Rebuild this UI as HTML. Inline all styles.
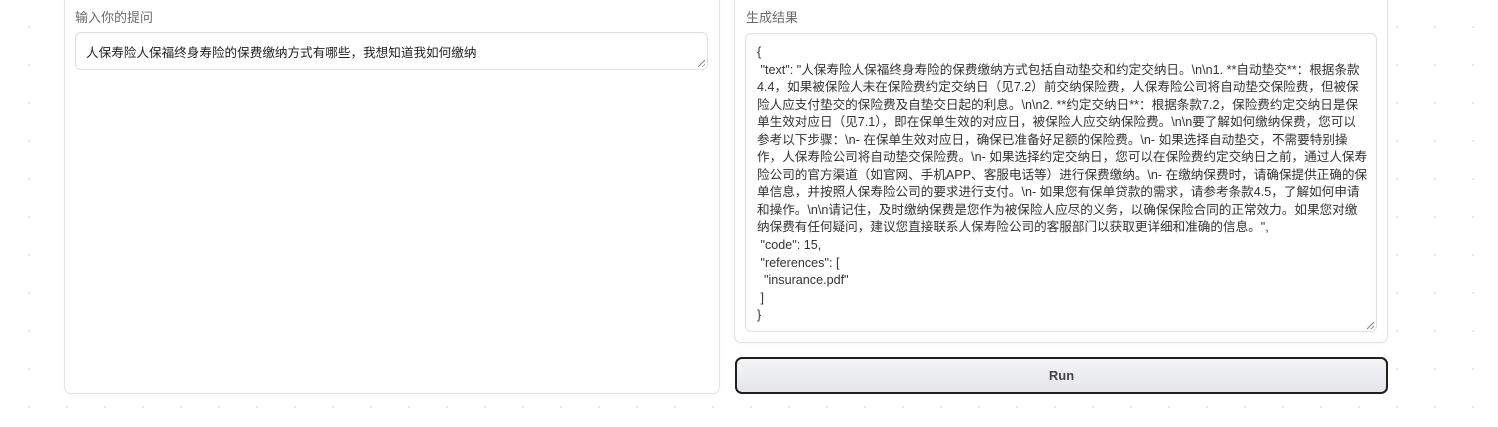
<!DOCTYPE html>
<html><head><meta charset="utf-8"><style>
body{margin:0;width:1498px;height:427px;background:#fff;position:relative;overflow:hidden;font-family:"Liberation Sans","Noto Sans CJK SC",sans-serif;}
.bg{position:absolute;inset:0;background-image:radial-gradient(circle,#e6e6e6 1px,transparent 1.3px);background-size:38px 38px;background-position:10px 8px;}
.panel{position:absolute;background:#fff;border:1px solid #e4e4e7;border-radius:7px;box-shadow:0 1px 2px rgba(0,0,0,.04);}
.label{position:absolute;font-size:13px;color:#6b6b6b;}
.ta{position:absolute;border:1px solid #e0e0e3;border-radius:6px;background:#fff;box-shadow:0 1px 2px rgba(0,0,0,.04) inset;}
.grip{position:absolute;right:2px;bottom:2px;width:7px;height:7px;background:linear-gradient(135deg,transparent 45%,#888 45%,#888 55%,transparent 55%,transparent 75%,#888 75%,#888 85%,transparent 85%);}
.out{position:absolute;left:11px;top:10px;font-size:12.6px;line-height:17.55px;color:#333;white-space:pre;}
.btn{position:absolute;left:735px;top:357px;width:649px;height:33px;border:2px solid #1f1f1f;border-radius:7px;background:linear-gradient(#f4f4f6,#e5e6ea);text-align:center;line-height:33px;font-size:13px;font-weight:bold;color:#444;}
</style></head><body>
<div class="bg"></div>
<div class="panel" style="left:64px;top:-8px;width:654px;height:400px;"></div>
<div class="label" style="left:75px;top:7px;">输入你的提问</div>
<div class="ta" style="left:75px;top:32px;width:631px;height:36px;"><div style="position:absolute;left:10px;top:9px;font-size:12.6px;color:#222;">人保寿险人保福终身寿险的保费缴纳方式有哪些，我想知道我如何缴纳</div><div class="grip"></div></div>
<div class="panel" style="left:734px;top:-8px;width:652px;height:349px;"></div>
<div class="label" style="left:746px;top:7px;">生成结果</div>
<div class="ta" style="left:745px;top:33px;width:630px;height:297px;"><div class="out">{
 "text": "人保寿险人保福终身寿险的保费缴纳方式包括自动垫交和约定交纳日。\n\n1. **自动垫交**：根据条款
4.4，如果被保险人未在保险费约定交纳日（见7.2）前交纳保险费，人保寿险公司将自动垫交保险费，但被保
险人应支付垫交的保险费及自垫交日起的利息。\n\n2. **约定交纳日**：根据条款7.2，保险费约定交纳日是保
单生效对应日（见7.1），即在保单生效的对应日，被保险人应交纳保险费。\n\n要了解如何缴纳保费，您可以
参考以下步骤：\n- 在保单生效对应日，确保已准备好足额的保险费。\n- 如果选择自动垫交，不需要特别操
作，人保寿险公司将自动垫交保险费。\n- 如果选择约定交纳日，您可以在保险费约定交纳日之前，通过人保寿
险公司的官方渠道（如官网、手机APP、客服电话等）进行保费缴纳。\n- 在缴纳保费时，请确保提供正确的保
单信息，并按照人保寿险公司的要求进行支付。\n- 如果您有保单贷款的需求，请参考条款4.5，了解如何申请
和操作。\n\n请记住，及时缴纳保费是您作为被保险人应尽的义务，以确保保险合同的正常效力。如果您对缴
纳保费有任何疑问，建议您直接联系人保寿险公司的客服部门以获取更详细和准确的信息。",
 "code": 15,
 "references": [
  "insurance.pdf"
 ]
}</div><div class="grip"></div></div>
<div class="btn">Run</div>
</body></html>
